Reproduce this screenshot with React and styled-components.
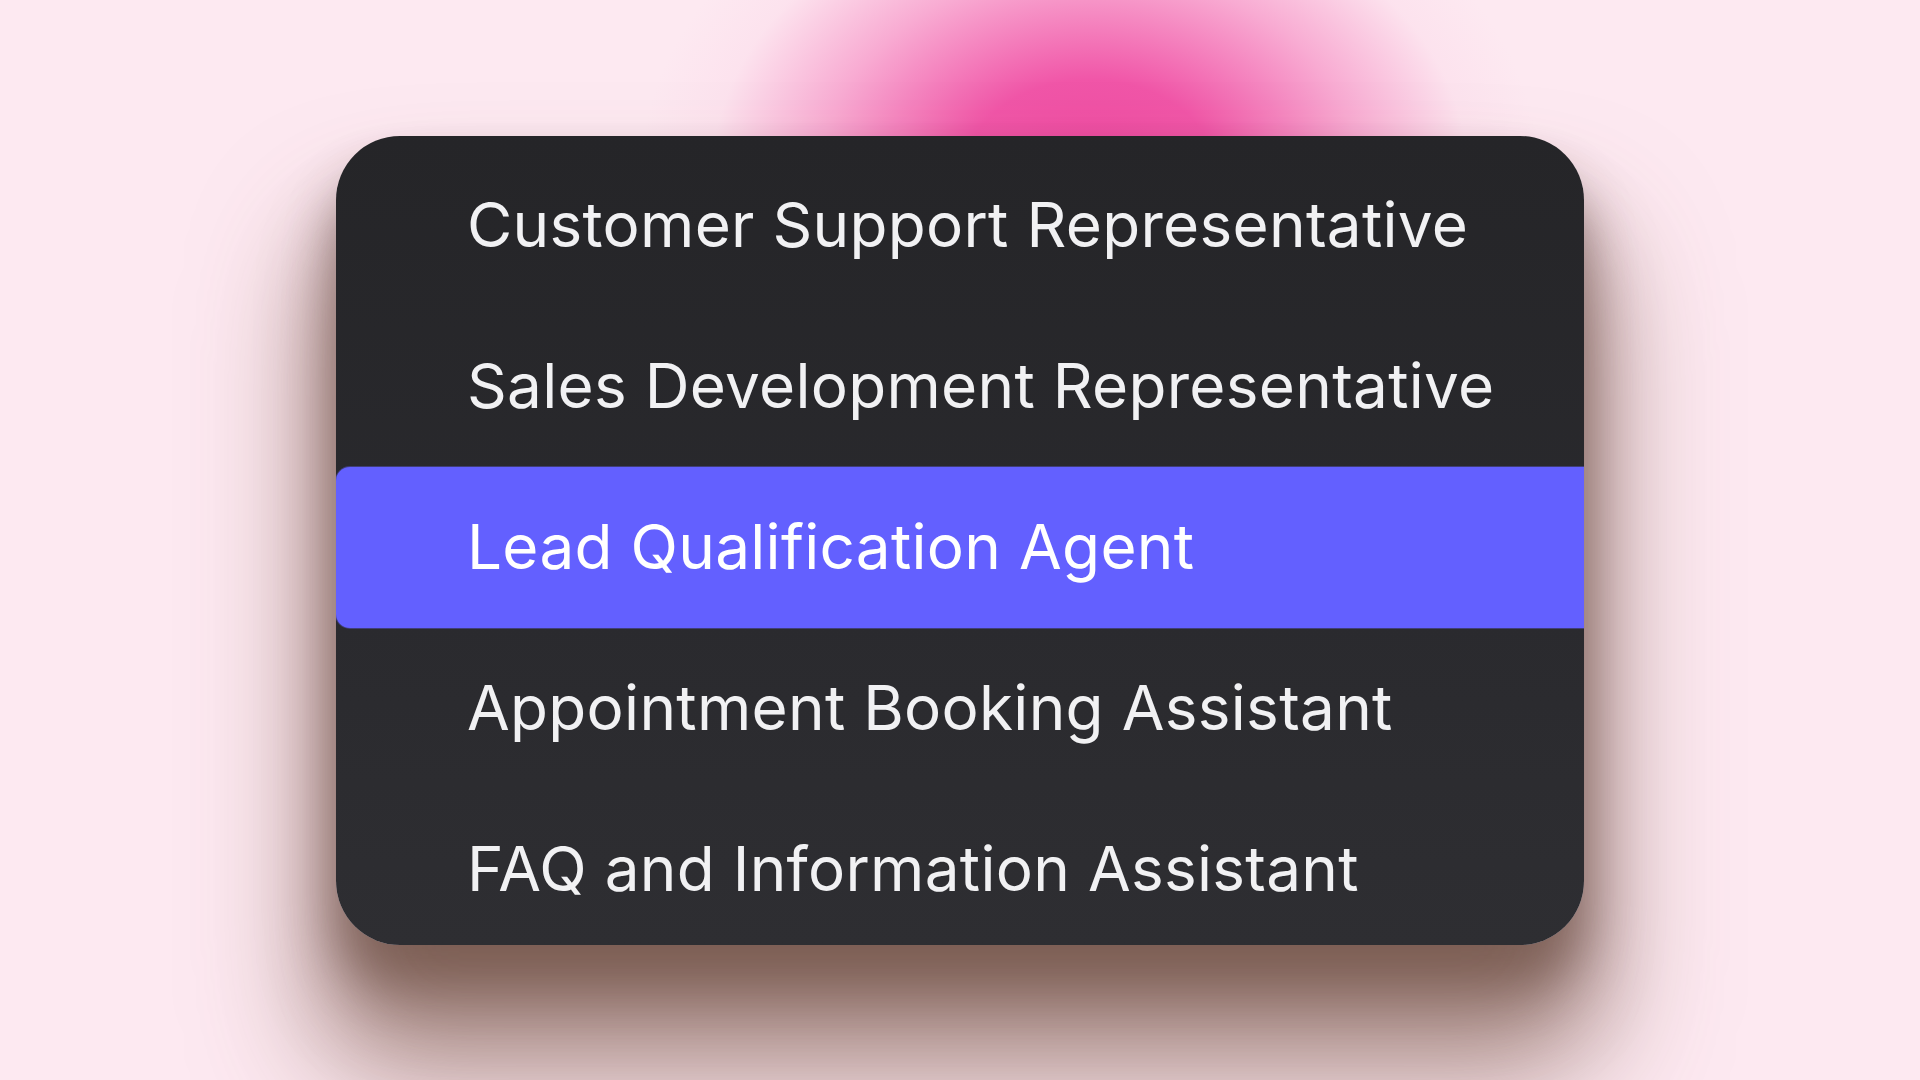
import styled, { createGlobalStyle } from "styled-components"

const GlobalStyle = createGlobalStyle`
  html, body {
    margin: 0;
    padding: 0;
  }
  body {
    background: #fde9f1;
    font-family: Inter, "Noto Sans", "Liberation Sans", sans-serif;
  }
`

const agents = [
  "Customer Support Representative",
  "Sales Development Representative",
  "Lead Qualification Agent",
  "Appointment Booking Assistant",
  "FAQ and Information Assistant",
]

const Stage = styled.div`
  width: 100vw;
  height: 100vh;
  display: flex;
  align-items: center;
  justify-content: center;
  overflow: hidden;
  background:
    radial-gradient(ellipse 450px 340px at 1090px 175px, #ee4aa1 0%, rgba(240, 78, 164, 0.95) 28%, rgba(244, 120, 185, 0.55) 60%, rgba(250, 200, 225, 0.2) 84%, rgba(253, 233, 241, 0) 100%),
    #fde9f1;
`

const Menu = styled.ul`
  list-style: none;
  margin: 0;
  padding: 9px 0 0 0;
  width: 1248px;
  height: 809px;
  box-sizing: border-box;
  border-radius: 64px;
  overflow: hidden;
  background: linear-gradient(180deg, #252528 0%, #2a2a2e 60%, #2e2e32 100%);
  box-shadow:
    0 110px 120px 20px rgba(110, 75, 55, 0.55),
    0 40px 50px rgba(70, 45, 35, 0.45),
    0 70px 80px 0 rgba(90, 55, 70, 0.3);
`

const Item = styled.li`
  height: 161px;
  display: flex;
  align-items: center;
  padding-left: 131px;
  box-sizing: border-box;
  font-size: 62px;
  font-weight: 400;
  line-height: 1.21;
  letter-spacing: 0.3px;
  white-space: nowrap;
  color: ${({ $active }) => ($active ? "#ffffff" : "#f1f1f3")};
  background: ${({ $active }) => ($active ? "#6360ff" : "transparent")};
  border-radius: ${({ $active }) => ($active ? "14px 0 0 14px" : "0")};
  box-shadow: ${({ $active }) => ($active ? "0 0 0 1px rgba(78, 76, 170, 0.6)" : "none")};
  cursor: pointer;
`

export default function App() {
  const selected = 2

  return (
    <>
      <GlobalStyle />
      <Stage>
        <Menu>
          {agents.map((name, i) => (
            <Item key={name} $active={i === selected}>
              {name}
            </Item>
          ))}
        </Menu>
      </Stage>
    </>
  )
}
